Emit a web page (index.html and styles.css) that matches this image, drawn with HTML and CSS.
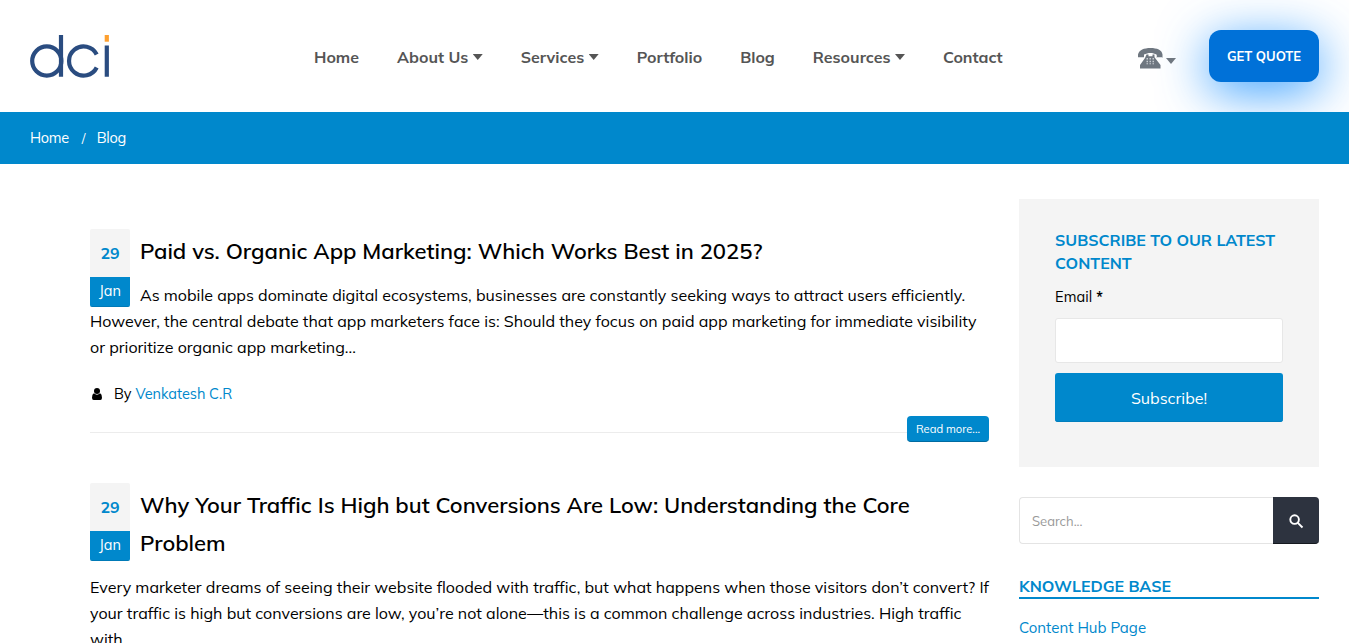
FILE: index.html
```html
<!DOCTYPE html>
<html lang="en">
<head>
<meta charset="utf-8">
<title>Blog</title>
<link rel="stylesheet" href="styles.css">
</head>
<body>
<div class="page">
<header class="header">
  <a class="logo" aria-label="dci"><svg width="82" height="46" viewBox="0 0 82 46" fill="none" stroke="#2a4c80" stroke-width="4.2"><circle cx="16.8" cy="26" r="14.6"/><path d="M31 0v41.8M66.700 19.500A14.600 14.600 0 1 0 66.700 32.500M76.800 10.600v31.200"/><path d="M76.800 0v6.700" stroke="#fea02f"/></svg></a>
  <nav class="nav">
    <a>Home</a>
    <a>About Us<i class="caret"></i></a>
    <a>Services<i class="caret"></i></a>
    <a>Portfolio</a>
    <a>Blog</a>
    <a>Resources<i class="caret"></i></a>
    <a>Contact</a>
  </nav>
  <div class="phone">
    <svg width="25" height="21" viewBox="0 0 25 21" fill="#6f7780"><path d="M0 10V6.500C1 2 6 0 12.500 0S24 2 24.500 6.500V10H18.500V6.700C15 4.500 10 4.500 6 6.700V10Z"/><path d="M8.500 6.500h2v1.800h4v-1.800h2v2.800L22.500 17v3.500H2V17L7 10Z"/><g fill="#fff"><path d="M0 9.800h6l1.800-2.800-.8-.6-1 .4v2.200H0zM24.500 9.800h-6l-1.800-2.800.8-.6 1 .4v2.200h6z"/></g><g fill="#c9cdd1"><path d="M8.500 10h1.500v1.500H8.500zM11.500 10H13v1.500h-1.500zM14.500 10H16v1.500h-1.500zM8.500 12.700h1.500v1.500H8.500zM11.500 12.700H13v1.500h-1.500zM14.500 12.700H16v1.500h-1.500zM8.500 15.200h1.500v1.100H8.500zM11.500 15.200H13v1.100h-1.500zM14.500 15.200H16v1.100h-1.500z"/></g></svg>
    <i class="caret"></i>
  </div>
  <a class="quote">GET QUOTE</a>
</header>
<div class="crumbs"><a>Home</a><span class="slash">/</span><a>Blog</a></div>
<div class="content">
  <main class="posts">
    <article class="post">
      <div class="date"><b>29</b><span>Jan</span></div>
      <h2>Paid vs. Organic App Marketing: Which Works Best in 2025?</h2>
      <p>As mobile apps dominate digital ecosystems, businesses are constantly seeking ways to attract users efficiently.<br>However, the central debate that app marketers face is: Should they focus on paid app marketing for immediate visibility<br>or prioritize organic app marketing...</p>
      <div class="meta"><svg width="10" height="12" viewBox="0 0 10 12"><circle cx="5" cy="3" r="3"/><path d="M1.900 5.300Q5 8 8.100 5.300Q10 6.200 10 9.800Q10 12 8.300 12H1.700Q0 12 0 9.800Q0 6.200 1.900 5.300Z"/></svg><span class="by">By</span><a class="author">Venkatesh C.R</a></div>
      <div class="more"><a>Read more...</a></div>
    </article>
    <article class="post">
      <div class="date"><b>29</b><span>Jan</span></div>
      <h2>Why Your Traffic Is High but Conversions Are Low: Understanding the Core<br>Problem</h2>
      <p>Every marketer dreams of seeing their website flooded with traffic, but what happens when those visitors don’t convert? If<br>your traffic is high but conversions are low, you’re not alone—this is a common challenge across industries. High traffic<br>with</p>
    </article>
  </main>
  <aside class="side">
    <section class="subscribe">
      <h3>SUBSCRIBE TO OUR LATEST<br>CONTENT</h3>
      <label>Email <b>*</b></label>
      <div class="input"></div>
      <a class="submit">Subscribe!</a>
    </section>
    <div class="search"><div class="field">Search...</div><div class="go"><svg width="15" height="15" viewBox="0 0 15 15" fill="none" stroke="#fff" stroke-width="1.900"><circle cx="5.600" cy="5.600" r="4.300"/><path d="m8.800 8.800 4.700 4.700"/></svg></div></div>
    <h3 class="kb">KNOWLEDGE BASE</h3>
    <a class="hub">Content Hub Page</a>
  </aside>
</div>
</div>
</body>
</html>
```
FILE: styles.css
```css
* { box-sizing: border-box; }
html, body { margin: 0; height: 643px; overflow: hidden; background: #fff; }
body { font-family: Muli, Mulish, Lato, "Open Sans", sans-serif; font-size: 16px; color: #000; }
.page { width: 1349px; height: 643px; overflow: hidden; }
.header { height: 112px; display: flex; padding: 0 30px; overflow: hidden; }
.logo { width: 284px; padding-top: 35px; }
.nav { width: 824px; display: flex; gap: 38px; padding-top: 46px; font-weight: 700; line-height: 23px; color: #555; white-space: nowrap; }
.nav a { display: flex; }
.caret { width: 10px; height: 6px; margin: 8px 0 0 4.500px; background: #555; clip-path: polygon(0 0, 100% 0, 50% 100%); }
.phone { width: 71px; display: flex; padding-top: 48px; }
.phone .caret { background: #6f7780; margin: 10px 0 0 3px; }
.quote { width: 110px; height: 52px; margin-top: 30px; border-radius: 12px; background: #0071d8; color: #fff; font-size: 13px; font-weight: 700; line-height: 52px; text-align: center; box-shadow: 0 10px 50px rgba(0, 132, 255, .78); }
.crumbs { position: relative; height: 52px; padding: 0 30px; display: flex; background: #0088cc; color: #fff; font-size: 14.5px; letter-spacing: -.3px; line-height: 52px; }
.slash { width: 28px; padding-left: 13px; font-size: 13px; }
.content { display: flex; gap: 30px; padding: 0 30px 0 90px; }
.posts { width: 899px; padding-top: 65px; }
.post { height: 254px; }
.date { float: left; width: 40px; margin-right: 10px; text-align: center; color: #0088cc; border-radius: 2px; overflow: hidden; }
.date b { display: block; height: 48px; line-height: 48px; background: #f4f4f4; }
.date span { display: block; height: 30px; line-height: 28px; background: #0088cc; color: #fff; font-size: 14.5px; box-shadow: inset 0 -1px 0 rgba(0, 0, 0, .1); }
h2 { margin: 0; padding-top: 3px; font-size: 22px; line-height: 38px; font-weight: 600; letter-spacing: .01px; }
p { margin: 12px 0 0; line-height: 26px; white-space: nowrap; letter-spacing: .01px; }
.meta { clear: both; display: flex; margin-top: 21px; padding-left: 2px; height: 26px; font-size: 14.5px; letter-spacing: -.05px; line-height: 24px; align-items: center; }
.by { margin: 0 4px 0 12px; }
.author, .hub { color: #0088cc; }
.more { display: flex; justify-content: flex-end; margin-top: 9px; height: 26px; background: linear-gradient(#ececec, #ececec) 0 16px / 100% 1px no-repeat; }
.more a { width: 82px; height: 26px; border-radius: 4px; background: #0088cc; border-bottom: 1px solid #006ba1; color: #fff; font-size: 11.2px; line-height: 27px; text-align: center; }
.side { width: 300px; padding-top: 35px; }
.subscribe { height: 268px; padding: 30px 36px; background: #f4f4f4; }
h3 { margin: 0; color: #0088cc; font-size: 16px; line-height: 23px; font-weight: 700; }
label { display: block; margin-top: 9px; font-size: 14.5px; letter-spacing: .1px; line-height: 26px; }
.input { height: 45px; margin-top: 8px; background: #fff; border: 1px solid #e7e7e7; border-radius: 3px; }
.submit { display: block; height: 49px; margin-top: 10px; background: #0088cc; border-radius: 3px; box-shadow: inset 0 -1px 0 #007ebd; color: #fff; line-height: 50px; text-align: center; }
.search { display: flex; height: 47px; margin-top: 30px; font-size: 13px; line-height: 47px; color: #999; }
.field { width: 254px; padding-left: 12px; border: 1px solid #e4e4e4; border-right: 0; border-radius: 4px 0 0 4px; }
.go { width: 46px; padding: 17px 0 0 16px; line-height: 0; background: #2d333f; border-bottom: 1px solid #15191f; border-radius: 0 4px 4px 0; }
.kb { margin-top: 31px; height: 24px; border-bottom: 2px solid #0088cc; }
.hub { display: block; margin-top: 16px; font-size: 15px; line-height: 26px; }
```
